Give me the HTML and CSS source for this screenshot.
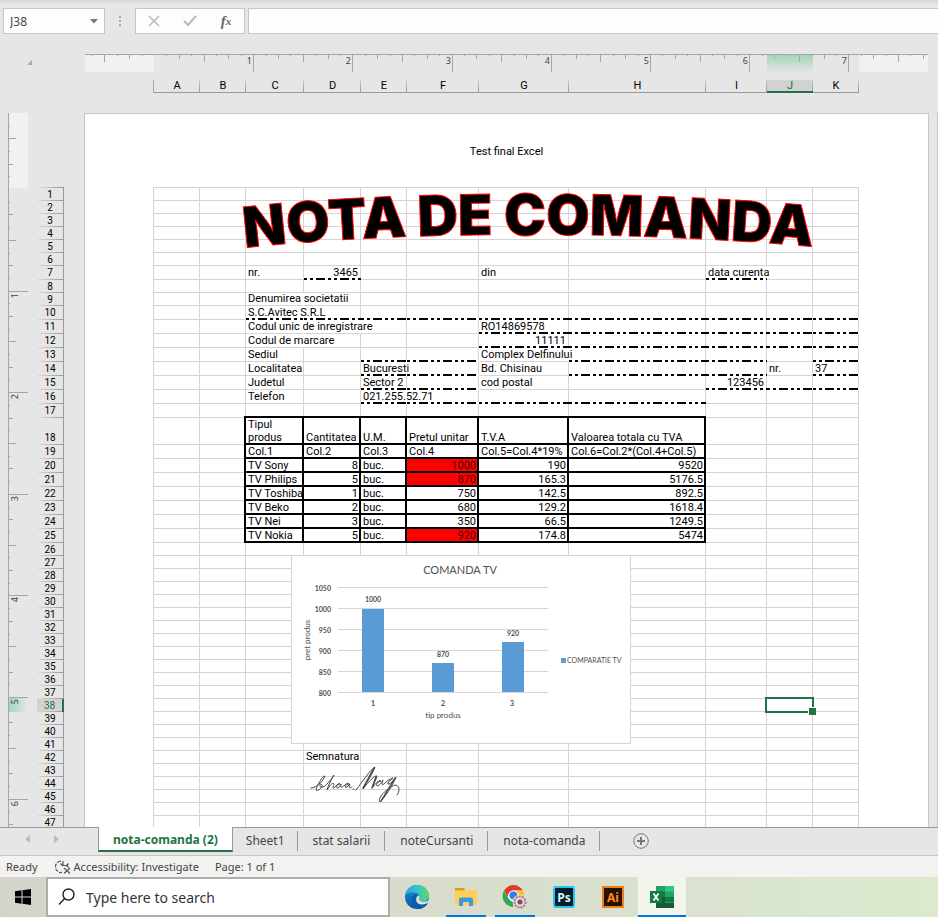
FILE: index.html
```html
<!DOCTYPE html>
<html lang="ro">
<head>
<meta charset="utf-8">
<title>nota-comanda - Excel</title>
<link rel="stylesheet" href="styles.css">
</head>
<body>
<div class="formula-bar">
  <div class="name-box">
    <input class="name-input" type="text" value="J38" aria-label="Name box">
    <button class="name-arrow" aria-label="Show names"><svg width="8" height="5" viewBox="0 0 8 5"><path d="M0 0h8L4 4.500z" fill="#777"/></svg></button>
  </div>
  <svg class="grip" width="2" height="10" viewBox="0 0 2 10" fill="#aaa"><path d="M0 0h2v2H0zM0 4h2v2H0zM0 8h2v2H0z"/></svg>
  <div class="formula-tools">
    <button aria-label="Cancel"><svg width="12" height="12" viewBox="0 0 12 12" fill="none" stroke="#bbb" stroke-width="1.600"><path d="M1 1l10 10M11 1L1 11"/></svg></button>
    <button aria-label="Enter"><svg width="14" height="12" viewBox="0 0 14 12" fill="none" stroke="#bbb" stroke-width="2.200"><path d="M1 6l4 4 8-9"/></svg></button>
    <button class="fx" aria-label="Insert function">f<small>x</small></button>
  </div>
  <input class="formula-input" type="text" aria-label="Formula">
</div>

<div class="top-headings">
  <button class="select-all" aria-label="Select all"><svg width="5" height="5" viewBox="0 0 5 5"><path d="M5 0v5H0z" fill="#aaa"/></svg></button>
  <div class="top-scales">
    <svg class="h-ruler" id="h-ruler" width="843" height="18" viewBox="0 0 843 18"></svg>
    <div class="col-heads" id="col-heads"></div>
  </div>
</div>

<main class="workspace">
  <svg class="v-ruler" id="v-ruler" width="20" height="714" viewBox="0 0 20 714"></svg>
  <div class="row-heads" id="row-heads"></div>
  <section class="page">
    <header class="page-header">Test final Excel</header>
    <div class="sheet">
      <table class="cells"><colgroup id="cols"></colgroup><tbody id="rows"></tbody></table>

      <svg class="wordart" width="590" height="70" viewBox="0 0 590 70">
        <path id="arc" d="M10 61C165 43 415 43 600 62" fill="none"/>
        <text class="wordart-text"><textPath href="#arc">NOTA DE COMANDA</textPath></text>
      </svg>

      <svg class="chart" width="340" height="189" viewBox="0 0 340 189">
        <rect x=".5" y=".5" width="339" height="188" fill="#fff" stroke="#d4d4d4"/>
        <path d="M47 32.5h210M47 53.5h210M47 74.5h210M47 95.5h210M47 116.5h210M47 137.5h210" stroke="#d6d6d6"/>
        <path d="M71 54h22v83H71zM141 108h22v29h-22zM211 87h22v50h-22zM270 103h5v5h-5z" fill="#5b9bd5"/>
        <text class="chart-title" x="169" y="19">COMANDA TV</text>
        <g class="axis-values"><text x="40" y="36">1050</text><text x="40" y="57">1000</text><text x="40" y="78">950</text><text x="40" y="99">900</text><text x="40" y="120">850</text><text x="40" y="141">800</text></g>
        <g class="chart-labels"><text x="82" y="47">1000</text><text x="152" y="102">870</text><text x="222" y="81">920</text><text x="82" y="151">1</text><text x="152" y="151">2</text><text x="221" y="151">3</text></g>
        <text class="axis-title" x="152" y="163">tip produs</text>
        <text class="axis-title" transform="translate(19 85) rotate(-90)">pret produs</text>
        <text class="legend" x="276" y="108">COMPARATIE TV</text>
      </svg>

      <svg class="signature" width="92" height="40" viewBox="0 0 92 40" fill="none" stroke="#444" stroke-width="1" stroke-linecap="round" stroke-linejoin="round">
        <path d="M1 22C7 22 14 14 15 10C13 9 6 21 6 24C9 26 14 19 11 18C9 18 9 22 13 21M13 21C18 19 24 9 24 9C21 14 18 20 17 24C20 19 23 16 24 18C24 20 21 24 25 21C27 18 30 17 30 18C26 18 26 23 28 22C30 21 31 18 31 18C30 22 31 22 35 19C36 17 40 17 39 18C35 18 34 23 37 21L40 18C38 23 40 22 42 21M43 23h1"/>
        <path d="M46 24C53 15 60 4 65 1C63 7 57 16 53 23C59 15 65 9 67 10C66 14 62 21 63 21C67 15 70 14 71 15C67 16 65 20 68 20C71 18 73 14 73 14C71 19 72 20 75 17C77 15 80 13 83 12C79 14 76 19 79 18C82 17 86 11 86 11C83 19 73 34 70 36C67 32 76 23 85 19C90 19 90 26 87 29"/>
        <path d="M66 11L62 22M64 2L53 22M85 12L71 35" stroke-width="1.400"/>
      </svg>
      <div class="selection"></div>
    </div>
  </section>
  <section class="next-page"></section>
</main>

<nav class="sheet-tabs">
  <div class="tab-scroll">
    <button aria-label="Previous sheet"><svg width="5" height="8" viewBox="0 0 5 8"><path d="M5 0v8L0 4z" fill="#bbb"/></svg></button>
    <button aria-label="Next sheet"><svg width="5" height="8" viewBox="0 0 5 8"><path d="M0 0v8l5-4z" fill="#bbb"/></svg></button>
  </div>
  <button class="tab active">nota-comanda (2)</button>
  <button class="tab">Sheet1</button>
  <button class="tab wide">stat salarii</button>
  <button class="tab wide">noteCursanti</button>
  <button class="tab wide">nota-comanda</button>
  <button class="add-sheet" aria-label="New sheet"><svg width="16" height="16" viewBox="0 0 16 16" fill="none" stroke="#777"><circle cx="8" cy="8" r="7.300"/><path d="M8 4v8M4 8h8" stroke-width="2"/></svg></button>
</nav>

<div class="status-bar">
  <span class="ready">Ready</span>
  <button class="access"><svg width="16" height="14" viewBox="0 0 16 14" fill="none" stroke="#555" stroke-width="1.200"><path d="M6 1.200A5.600 5.600 0 0 0 3 11.500" stroke-dasharray="4 1.200"/><path d="M4 12.600l3-.3M8 1v5M5.500 3.500L8 6M8 5.500h5M13.500 3.500l-2 2 2 2M9 8l6 5.500M15 8l-6 5.500"/></svg>Accessibility: Investigate</button>
  <span class="pages">Page: 1 of 1</span>
</div>

<footer class="taskbar">
  <button class="start" aria-label="Start"><svg width="16" height="16" viewBox="0 0 16 16"><path d="M0 2.200L6.500 1.300V7.500H0zM7.500 1.200L16 0v7.500H7.500zM0 8.500h6.500v6.200L0 13.800zM7.500 8.500H16V16l-8.500-1.200z"/></svg></button>
  <label class="search"><svg width="18" height="18" viewBox="0 0 18 18" fill="none" stroke="#222" stroke-width="1.400"><circle cx="10.500" cy="6.500" r="5.500"/><path d="M6.600 10.500L1 16.500"/></svg><input type="text" placeholder="Type here to search" aria-label="Search"></label>
  <div class="apps">
    <button aria-label="Edge"><svg width="24" height="24" viewBox="0 0 24 24">
      <defs><linearGradient id="e1" x1="0" x2="1"><stop offset="0" stop-color="#2aa5df"/><stop offset=".55" stop-color="#37c5c8"/><stop offset="1" stop-color="#62d85a"/></linearGradient><linearGradient id="e2" x1="0" y1="0" x2="0" y2="1"><stop offset="0" stop-color="#1c8fd8"/><stop offset="1" stop-color="#0c56a5"/></linearGradient></defs>
      <circle cx="12" cy="12" r="12" fill="url(#e2)"/>
      <path d="M.2 10.500C1 4.500 6 0 12 0c7 0 12 5 12 10.500 0 4-3 6-6 6-3.500 0-5-1.500-4.500-2.500 1-1 1.500-2.500.5-4C12 6.500 3.500 6 .2 10.500z" fill="url(#e1)"/>
      <path d="M12.500 9.500C6 7.500 4.500 19 13 23.900 18 24 21.500 21 23 18c-4 3-13 2-12.500-5 .2-1.500 1-2.500 2-3.500z" fill="#0b5cad"/>
      <path d="M13.500 10.500c-3.500 1.500-3.500 8.500 3 9 3 .2 5-.8 7-2.500l1.500-3c-2 2.500-5 3-7.500 2.500-3-.5-4-1.700-3.500-2.500 1-1 .8-2.500-.5-3.500z" fill="#dce5da"/></svg></button>
    <button class="running" aria-label="File Explorer"><svg width="22" height="20" viewBox="0 0 22 20"><path d="M0 1.500Q0 1 .8 1H9l1.500 2H21q1 0 1 1v14H0z" fill="#ffcf5c"/><path d="M0 1h9.500v2.500H0z" fill="#dc9c12"/><path d="M4 19v-6.500q0-2 2-2h10q2 0 2 2V19h-4v-4H8v4z" fill="#3b99dc"/></svg></button>
    <button class="running" aria-label="Chrome"><svg width="26" height="26" viewBox="0 0 26 26"><circle cx="11.500" cy="12" r="11" fill="#fff"/><path d="M2 6.500A11 11 0 0 1 21 6.500H11.500A5.500 5.500 0 0 0 6.500 14z" fill="#e23b2e"/><path d="M21 6.500A11 11 0 0 1 11.500 23l5-8.500a5.500 5.500 0 0 0-5-8z" fill="#fbc116"/><path d="M2 6.500l4.700 8.300A5.500 5.500 0 0 0 14 17l-3 6A11 11 0 0 1 2 6.500z" fill="#2da94f"/><circle cx="11.500" cy="11.500" r="4.600" fill="#3579ea" stroke="#fff"/><circle cx="18" cy="18" r="7.500" fill="#e2dada"/><circle cx="18" cy="18" r="5.500" fill="none" stroke="#a87880" stroke-width="2" stroke-dasharray="2 1"/><circle cx="18" cy="18" r="2.500" fill="#914452"/></svg></button>
    <button aria-label="Photoshop"><svg width="22" height="22" viewBox="0 0 22 22"><rect x="1" y="1" width="20" height="20" rx="2" fill="#001d26" stroke="#28c3f5" stroke-width="2"/><text class="app-mark" x="11" y="15.500" fill="#d5f3ff">Ps</text></svg></button>
    <button aria-label="Illustrator"><svg width="22" height="22" viewBox="0 0 22 22"><rect x="1" y="1" width="20" height="20" fill="#271200" stroke="#f08118" stroke-width="2"/><text class="app-mark" x="11" y="15.500" fill="#ff8c1a">Ai</text></svg></button>
    <button class="running current" aria-label="Excel"><svg width="24" height="22" viewBox="0 0 24 22"><path d="M6 0h9v11H6z" fill="#21a366"/><path d="M15 0h9v6h-9z" fill="#33c481"/><path d="M6 5.500h9V11H6z" fill="#107c41"/><path d="M15 5.500h9V11h-9z" fill="#21a366"/><path d="M6 11h9v11H6z" fill="#185c37"/><path d="M15 11h9v5.500h-9z" fill="#107c41"/><path d="M15 16.500h9V22h-9z" fill="#185c37"/><path d="M0 5h12v12H0z" fill="#107c41"/><path d="M3.500 7.500l5 7M8.500 7.500l-5 7" stroke="#fff" stroke-width="1.800"/></svg></button>
  </div>
</footer>
<script src="sheet.js"></script>
</body>
</html>
```
FILE: sheet.js
```js
const columns = [46, 46, 58, 57, 46, 72, 90, 137, 61, 46, 46];
const letters = 'ABCDEFGHIJK';
const rowCount = 47;
const tallRows = { 7: 14, 18: 27 };
for (let r = 10; r <= 17; r++) tallRows[r] = 14;
for (let r = 19; r <= 25; r++) tallRows[r] = 14;
const rowHeight = r => tallRows[r] || 13;

const cells = {
  C7: 'nr.', D7: 3465, G7: 'din', I7: 'data curenta',
  C9: 'Denumirea societatii', C10: 'S.C.Avitec S.R.L',
  C11: 'Codul unic de inregistrare', G11: 'RO14869578',
  C12: 'Codul de marcare', G12: 11111,
  C13: 'Sediul', G13: 'Complex Delfinului',
  C14: 'Localitatea', E14: 'Bucuresti', G14: 'Bd. Chisinau', J14: 'nr.', K14: '37',
  C15: 'Judetul', E15: 'Sector 2', G15: 'cod postal', I15: 123456,
  C16: 'Telefon', E16: '021.255.52.71',
  D42: 'Semnatura'
};
const products = [
  ['Tipul produs', 'Cantitatea', 'U.M.', 'Pretul unitar', 'T.V.A', 'Valoarea totala cu TVA'],
  ['Col.1', 'Col.2', 'Col.3', 'Col.4', 'Col.5=Col.4*19%', 'Col.6=Col.2*(Col.4+Col.5)'],
  ['TV Sony', 8, 'buc.', 1000, 190, 9520],
  ['TV Philips', 5, 'buc.', 870, 165.3, 5176.5],
  ['TV Toshiba', 1, 'buc.', 750, 142.5, 892.5],
  ['TV Beko', 2, 'buc.', 680, 129.2, 1618.4],
  ['TV Nei', 3, 'buc.', 350, 66.5, 1249.5],
  ['TV Nokia', 5, 'buc.', 920, 174.8, 5474]
];
products.forEach((line, i) => line.forEach((v, j) => { cells['CDEFGH'[j] + (18 + i)] = v; }));

// Cells underlined with a dash-dot-dot border, by row
const dashed = { 7: 'DI', 10: 'CDEFGHIJK', 11: 'GHIJK', 12: 'GHIJK', 13: 'EFHIK', 14: 'EFHIK', 15: 'EFIJK', 16: 'EFGH' };
// Cells whose text runs over the gridline on their right
const spill = ['C9', 'C10', 'C11', 'D11', 'C12', 'I7', 'G13', 'E14', 'E16'];

document.getElementById('cols').innerHTML = columns.map(w => `<col style="width:${w}px">`).join('');
document.getElementById('col-heads').innerHTML = columns
  .map((w, i) => `<div class="col-head${letters[i] === 'J' ? ' on' : ''}" style="width:${w}px">${letters[i]}</div>`).join('');

let body = '';
let heads = '';
for (let r = 1; r <= rowCount; r++) {
  heads += `<div class="row-head${r === 38 ? ' on' : ''}" style="height:${rowHeight(r)}px">${r}</div>`;
  body += `<tr style="height:${rowHeight(r)}px">`;
  for (const c of letters) {
    const v = cells[c + r];
    const cls = [];
    if (typeof v === 'number') cls.push('num');
    if ((dashed[r] || '').includes(c)) cls.push('dash');
    if (spill.includes(c + r)) cls.push('spill');
    if (r >= 18 && r <= 25 && 'CDEFGH'.includes(c)) cls.push('boxed');
    if (r === 18) cls.push('wrap');
    if (r >= 20 && r <= 25 && c === 'F' && v > 750) cls.push('high');
    body += `<td class="${cls.join(' ')}">${v === undefined ? '' : v}</td>`;
  }
  body += '</tr>';
}
document.getElementById('rows').innerHTML = body;
document.getElementById('row-heads').innerHTML = heads;

const tickLength = (k, full) => k % 8 === 0 ? full : k % 4 === 0 ? 7 : k % 2 === 0 ? 4 : 1;

let h = '<defs><linearGradient id="hg" x2="0" y2="1"><stop stop-color="#9fd5b7"/><stop offset="1" stop-color="#e1e5e2"/></linearGradient></defs>'
  + '<rect width="69" height="18" fill="#f1f1f1"/><rect x="774" width="69" height="18" fill="#f1f1f1"/>'
  + '<rect x="682" width="46" height="18" fill="url(#hg)"/><rect width="843" height="1" fill="#a6a6a6"/>';
for (let k = -5; k <= 62; k++) {
  if (k === 0) continue;
  const x = Math.round(69 + k * 12.4);
  h += `<rect x="${x}" y="1" width="1" height="${tickLength(k, 17)}" fill="#a6a6a6"/>`;
  if (k > 0 && k % 8 === 0) h += `<text class="ruler-num" x="${x - 1}" y="10" text-anchor="end">${k / 8}</text>`;
}
document.getElementById('h-ruler').innerHTML = h;

let v = '<defs><linearGradient id="vg"><stop stop-color="#9fd5b7"/><stop offset="1" stop-color="#e6e6e6"/></linearGradient></defs>'
  + '<rect width="20" height="75" fill="#f1f1f1"/><rect y="585" width="20" height="14" fill="url(#vg)"/>'
  + '<rect width="1" height="714" fill="#a6a6a6"/>';
for (let k = -5; k <= 50; k++) {
  if (k === 0) continue;
  const y = Math.round(76 + k * 12.7);
  v += `<rect x="1" y="${y}" width="${tickLength(k, 19)}" height="1" fill="#a6a6a6"/>`;
  if (k > 0 && k % 8 === 0) v += `<text class="ruler-num" transform="translate(10 ${y + 2}) rotate(-90)" text-anchor="end">${k / 8}</text>`;
}
document.getElementById('v-ruler').innerHTML = v;
```
FILE: styles.css
```css
* { box-sizing: border-box; }
body {
  margin: 0;
  height: 100vh;
  display: flex;
  flex-direction: column;
  overflow: hidden;
  background: #e6e6e6;
  color: #000;
  font-family: "Noto Sans", "Open Sans", sans-serif;
  font-size: 12px;
}
button, input { font: inherit; color: inherit; border: 0; background: none; padding: 0; margin: 0; }
button { display: flex; align-items: center; justify-content: center; }

/* Formula bar */
.formula-bar {
  display: flex;
  align-items: center;
  flex: none;
  height: 42px;
  padding: 0 0 0 3px;
  background: linear-gradient(#d6d6d6, #e6e6e6 4px);
}
.name-box, .formula-tools, .formula-input { height: 26px; border: 1px solid #c6c6c6; background: #fdfdfd; }
.name-box { display: flex; width: 102px; color: #444; }
.name-input { flex: 1; min-width: 0; padding-left: 6px; }
.name-arrow { width: 20px; }
.grip { margin: 0 14px; }
.formula-tools { display: flex; width: 110px; }
.formula-tools button { flex: 1; }
.fx { font: italic bold 15px "Liberation Serif", serif; color: #666; }
.fx small { font-size: 11px; }
.formula-input { flex: 1; margin-left: 3px; border-right: 0; }

/* Ruler and column letters */
.top-headings { display: flex; flex: none; height: 71px; padding-top: 12px; }
.select-all { width: 5px; height: 5px; margin: 6px 53px 0 27px; }
.h-ruler { display: block; }
.ruler-num { font-size: 9px; fill: #444; }
.col-heads { display: flex; width: max-content; margin: 8px 0 0 68px; border-left: 1px solid #aaa; }
.col-head {
  height: 13px;
  border-bottom: 1px solid #999;
  background: linear-gradient(#ccc, #999) right / 1px 100% no-repeat;
  font: 11px/12px Roboto, sans-serif;
  text-align: center;
}
.col-head.on { background-color: #d2d2d2; border-bottom: 2px solid #217346; color: #217346; }

/* Workspace */
.workspace { display: flex; flex: 1; min-height: 0; overflow: hidden; }
.v-ruler { flex: none; margin-left: 8px; overflow: visible; }
.row-heads { flex: none; width: 27px; height: max-content; margin: 74px 20px 0 9px; border-right: 1px solid #999; padding-top: 1px; background: linear-gradient(90deg, #ddd, #999) top / 100% 1px no-repeat; }
.row-head {
  background: linear-gradient(90deg, #ddd, #999) bottom / 100% 1px no-repeat;
  font: 10px/14px Roboto, sans-serif;
  display: flex;
  align-items: safe flex-end;
  justify-content: center;
}
.row-head.on { background-color: #d2d2d2; color: #217346; margin-right: -1px; border-right: 2px solid #217346; }
.page { flex: none; width: 845px; height: max-content; border: 1px solid #c6c6c6; background: #fff; font: 11px/13px Roboto, sans-serif; }
.page-header { height: 73px; padding-top: 31px; text-align: center; }
.next-page { flex: 1; height: 900px; margin-left: 8px; border: 1px solid #c6c6c6; background: #fff; }
.sheet { position: relative; width: 706px; margin-left: 68px; }

.cells { width: 706px; table-layout: fixed; border-collapse: separate; border-spacing: 0; border: solid #d4d4d4; border-width: 1px 0 0 1px; }
.cells td {
  position: relative;
  padding: 0 0 0 2px;
  border: solid #d4d4d4;
  border-width: 0 1px 1px 0;
  line-height: 12px;
  white-space: nowrap;
  vertical-align: bottom;
}
.cells td.num { text-align: right; padding: 0 2px 0 0; }
.cells td.wrap { white-space: normal; line-height: 13px; }
.cells td.spill { border-right-color: transparent; }
.cells td.high { background: #f00; color: #400; }
.dash::after {
  content: "";
  position: absolute;
  left: 0;
  right: -1px;
  bottom: -1px;
  height: 2px;
  background: repeating-linear-gradient(90deg, #000 0 3px, #fff 3px 6px, #000 6px 9px, #fff 9px 12px, #000 12px 21px, #fff 21px 24px);
}
.boxed::before { content: ""; position: absolute; inset: -2px -1px -1px -2px; border: 2px solid #000; }

/* Floating objects */
.wordart { position: absolute; left: 82px; top: 0; overflow: visible; }
.wordart-text { font: 900 56px Inter, sans-serif; fill: #000; stroke: #f00; stroke-width: 1; }
.chart { position: absolute; left: 138px; top: 368px; font-family: Lato, sans-serif; font-size: 8px; }
.chart text { fill: #505050; }
.chart-title { font-size: 11px; text-anchor: middle; }
.chart-labels, .axis-title { text-anchor: middle; }
.axis-values { text-anchor: end; }
.axis-values, .chart-labels { font-size: 7px; font-weight: 700; }
.legend { font-size: 7px; }
.signature { position: absolute; left: 157px; top: 579px; }
.selection { position: absolute; left: 612px; top: 510px; width: 49px; height: 16px; border: 2px solid #217346; }
.selection::after { content: ""; position: absolute; right: -4px; bottom: -4px; width: 7px; height: 7px; border: solid #fff; border-width: 1px 0 0 1px; background: #217346; }

/* Sheet tabs */
.sheet-tabs { display: flex; flex: none; height: 29px; border-bottom: 1px solid #c6c6c6; color: #444; box-shadow: inset 0 1px #999; }
.tab-scroll { display: flex; gap: 24px; width: 98px; padding: 0 0 4px 25px; }
.tab { position: relative; height: 25px; padding: 2px 13px 0; }
.tab.wide { padding: 2px 15px 0; }
.tab::after { content: ""; position: absolute; right: 0; top: 4px; width: 1px; height: 20px; background: #999; }
.tab.active { padding: 2px 14px 0; border: solid #999; border-width: 0 1px; border-bottom: 2px solid #217346; background: #fff; color: #217346; font-weight: 700; }
.tab.active::after { content: none; }
.add-sheet { margin: 2px 0 0 33px; height: 24px; }

/* Status bar */
.status-bar { display: flex; align-items: center; flex: none; height: 21px; padding-left: 6px; background: #f3f2f1; color: #444; font-size: 11px; }
.access { gap: 3px; margin-left: 17px; }
.pages { margin-left: 16px; }

/* Taskbar */
.taskbar { display: flex; flex: none; height: 40px; background: linear-gradient(90deg, #d4d4cc, #d8dccb 45%, #d9e3cf 75%, #dce9cd); }
.start { width: 46px; }
.search { display: flex; align-items: center; gap: 10px; width: 344px; padding-left: 10px; border: 2px solid #adadad; background: #fff; }
.search input { flex: 1; min-width: 0; font-size: 14px; outline: 0; }
.search input::placeholder { color: #333; opacity: 1; }
.apps { display: flex; gap: 1px; margin-left: 3px; }
.apps button { position: relative; width: 48px; }
.running::after { content: ""; position: absolute; left: 4px; right: 4px; bottom: 0; height: 2px; background: #0078d7; }
.current { background: #f2f5ed; }
.current::after { left: 0; right: 0; }
.app-mark { font: 700 12px "Noto Sans", sans-serif; text-anchor: middle; }
```
